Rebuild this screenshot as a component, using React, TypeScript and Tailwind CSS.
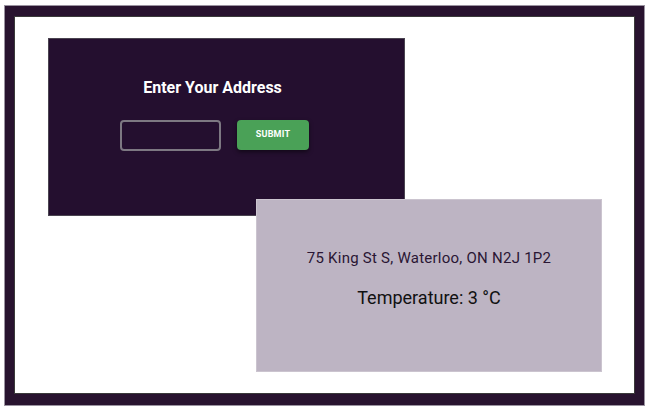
export default function App() {
  return (
    <div className="w-[650px] h-[411px] bg-white pt-[6px] pl-[5px]" style={{ fontFamily: "Roboto, 'Liberation Sans', sans-serif" }}>
      <div className="w-[639px] h-[399px] border-x-[9px] border-t-[10px] border-b-[11px] border-[#28132f] outline outline-1 outline-[#9a93a0] bg-white">
        <div className="h-full border border-[#3a3a3a] pl-[33px] pt-[21px]">
          {/* address form */}
          <div className="w-[357px] h-[178px] bg-[#240f2f] border border-[#4a4450] pr-[28px] pt-[37px] flex flex-col items-center">
            <h1 className="text-white text-[16px] leading-[24px] font-bold">Enter Your Address</h1>
            <div className="mt-[20px] ml-[4px] flex gap-[16px]">
              <input className="w-[101px] h-[31px] border-2 border-[#7d7882] rounded-[4px] bg-transparent outline-none" />
              <button className="w-[72px] h-[30px] bg-[#4aa157] rounded-[4px] text-white text-[9px] font-bold tracking-[0.2px] shadow-[0_2px_4px_rgba(0,0,0,0.5)]">
                SUBMIT
              </button>
            </div>
          </div>
          {/* result */}
          <div className="relative ml-[208px] -mt-[17px] w-[346px] h-[173px] bg-[#bdb4c3] border border-[#cbc4cf] pt-[48px] flex flex-col items-center">
            <p className="text-[#2a1634] text-[15px] leading-[20px] tracking-[0.25px]">75 King St S, Waterloo, ON N2J 1P2</p>
            <p className="mt-[18px] text-[#111111] text-[18px] leading-[24px]">Temperature: 3 °C</p>
          </div>
        </div>
      </div>
    </div>
  );
}
